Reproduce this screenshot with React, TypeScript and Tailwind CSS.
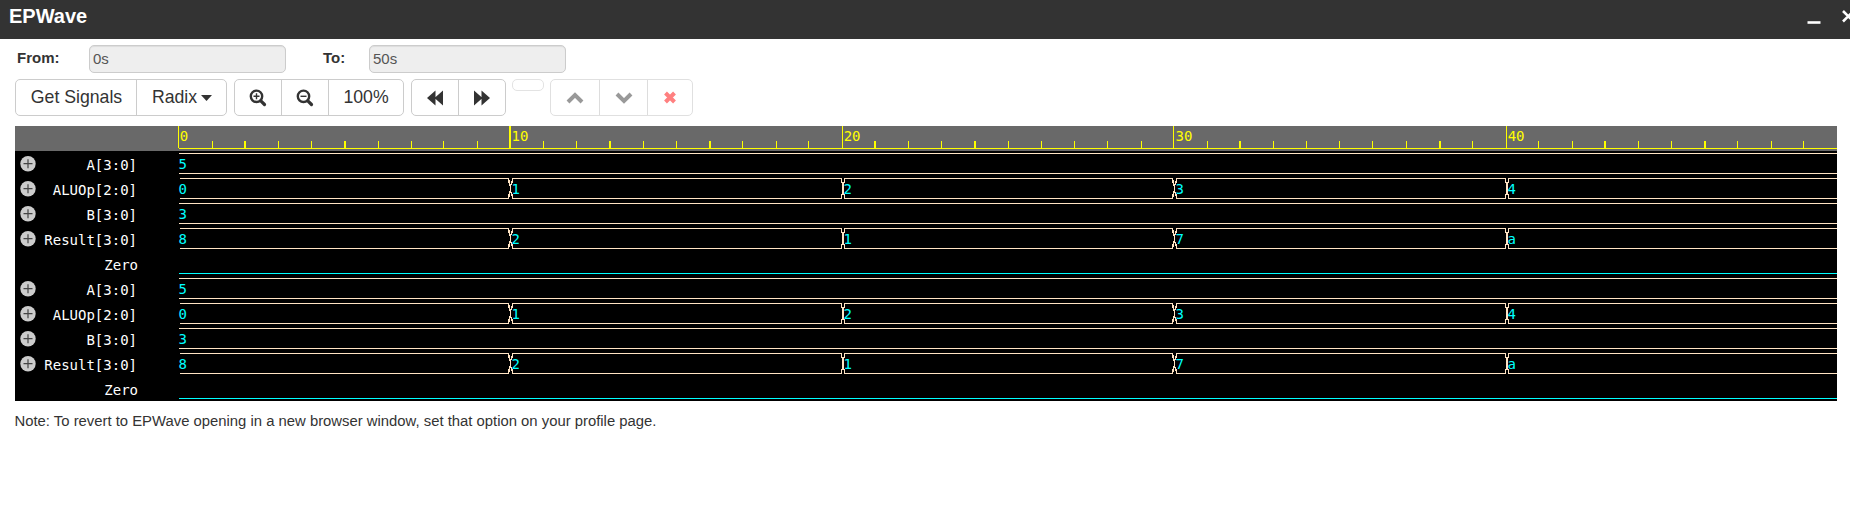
type Signal = { name: string; values?: string[] };

const signals: Signal[] = [
  { name: "A[3:0]", values: ["5"] },
  { name: "ALUOp[2:0]", values: ["0", "1", "2", "3", "4"] },
  { name: "B[3:0]", values: ["3"] },
  { name: "Result[3:0]", values: ["8", "2", "1", "7", "a"] },
  { name: "Zero" },
];
const rows = [...signals, ...signals];

// Left edges of the divisions, relative to the plot area.
const majors = [0, 331, 664, 995, 1328];
const minors = [
  34, 66, 100, 133, 166, 200, 233, 265, 299, 365, 398, 431, 465, 498, 531, 564, 598, 630, 696, 730, 763, 796, 830,
  863, 896, 929, 963, 1029, 1061, 1095, 1128, 1161, 1194, 1228, 1261, 1294, 1360, 1394, 1426, 1460, 1493, 1526, 1559,
  1593, 1625,
];
const wideMinors = [66, 166, 431, 531, 696, 796, 1061, 1261, 1426, 1526];
const PLOT_W = 1659;

function Ruler() {
  return (
    <svg width={PLOT_W} height={25} shapeRendering="crispEdges" className="block">
      <rect x={1} y={22} width={PLOT_W} height={1} fill="#ff0" />
      {minors.map((x) => (
        <rect key={x} x={x} y={15} width={wideMinors.includes(x) ? 2 : 1} height={7} fill="#ff0" />
      ))}
      {majors.map((x, n) => (
        <g key={x} fill="#ff0">
          <rect x={x} y={0} width={n === 1 ? 2 : 1} height={22} />
          <text x={x + (n % 2 === 1 ? 2.5 : 1.7)} y={15} className="font-['DejaVu_Sans_Mono',monospace] text-[14px]">
            {n * 10}
          </text>
        </g>
      ))}
    </svg>
  );
}

function Crossing({ x, width }: { x: number; width: number }) {
  return (
    <g>
      <rect x={x - 1} y={2} width={1} height={5} />
      <rect x={x - 1} y={18} width={1} height={5} />
      <rect x={x + width} y={2} width={1} height={5} />
      <rect x={x + width} y={18} width={1} height={5} />
      {width === 3 ? (
        <>
          <rect x={x} y={4} width={1} height={6} />
          <rect x={x} y={15} width={1} height={6} />
          <rect x={x + 2} y={5} width={1} height={4} />
          <rect x={x + 2} y={16} width={1} height={4} />
          <rect x={x + 1} y={8} width={1} height={9} />
        </>
      ) : (
        <rect x={x} y={6} width={2} height={13} />
      )}
    </g>
  );
}

function Wave({ signal }: { signal: Signal }) {
  if (!signal.values) {
    return (
      <svg width={PLOT_W} height={25} shapeRendering="crispEdges" className="block">
        <rect x={1} y={22} width={PLOT_W} height={1} fill="#0ff" />
      </svg>
    );
  }
  const values = signal.values;
  return (
    <svg width={PLOT_W} height={25} shapeRendering="crispEdges" className="block">
      {values.map((v, i) => {
        const crossW = i % 2 === 1 ? 3 : 2;
        const start = i === 0 ? (values.length > 1 ? 2 : 1) : majors[i] + crossW;
        const end = i < values.length - 1 ? majors[i + 1] : PLOT_W;
        return (
          <g key={i} fill="#ffe4c4">
            <rect x={start} y={2} width={end - start} height={1} />
            <rect x={start} y={22} width={end - start} height={1} />
            {i > 0 && <Crossing x={majors[i]} width={crossW} />}
            <text
              x={i === 0 ? 0.5 : majors[i] + (i % 2 === 1 ? 2.5 : 1.5)}
              y={18}
              fill="#0ff"
              className="font-['DejaVu_Sans_Mono',monospace] text-[14px]"
            >
              {v}
            </text>
          </g>
        );
      })}
    </svg>
  );
}

function Zoom({ plus }: { plus?: boolean }) {
  return (
    <svg width="18" height="18" viewBox="0 0 18 18" fill="none" stroke="#333">
      <circle cx="7.5" cy="7.3" r="5.7" strokeWidth="2.4" />
      <path d="M11.8 11.8L15.500 15.500" strokeWidth="3.2" strokeLinecap="round" />
      <path d={plus ? "M4.5 7.3h6M7.5 4.3v6" : "M4.5 7.3h6"} strokeWidth="1.4" />
    </svg>
  );
}

const group = "flex h-[37px] rounded-[5px] border border-[#ccc] divide-x divide-[#ccc]";
const cell = "flex items-center justify-center";
const field =
  "h-[28px] w-[197px] rounded-[5px] border border-[#ccc] bg-[#eee] pl-[3px] leading-[26px] text-[#555] shadow-[inset_0_1px_1px_rgba(0,0,0,0.075)]";

export default function App() {
  return (
    <div className="h-[527px] w-[1850px] overflow-hidden bg-white font-['Liberation_Sans',Arial,sans-serif] text-[#333]">
      <header className="flex h-[39px] items-start justify-between bg-[#333] pl-[9px] text-white">
        <h1 className="pt-[3px] text-[20px] leading-[26px] font-bold">EPWave</h1>
        <svg width="43" height="39" viewBox="0 0 43 39" fill="none" stroke="#fff">
          <path d="M.5 22.500h13" strokeWidth="2.6" />
          <path d="M36 11l10 10M36 21.500l10-10" strokeWidth="2.6" />
        </svg>
      </header>

      <div className="flex pt-[6px] pl-[17px] text-[15px]">
        <label className="w-[72px] pt-[2px] leading-[21px] font-bold">From:</label>
        <div className={field}>0s</div>
        <label className="ml-[37px] w-[46px] pt-[2px] leading-[21px] font-bold">To:</label>
        <div className={field}>50s</div>
      </div>

      <div className="mt-[6px] flex items-start pl-[15px] text-[17.700px]">
        <div className={group + " w-[212px]"}>
          <button className={cell + " w-[121px] pl-[1px]"}>Get Signals</button>
          <button className={cell + " flex-1 gap-[4px] pl-[1px]"}>
            Radix
            <svg width="11" height="6" viewBox="0 0 11 6" fill="#333"><path d="M0 0h11L5.500 6z" /></svg>
          </button>
        </div>
        <div className={group + " ml-[7px] w-[170px]"}>
          <button className={cell + " w-[47px]"}><Zoom plus /></button>
          <button className={cell + " w-[47px]"}><Zoom /></button>
          <button className={cell + " flex-1"}>100%</button>
        </div>
        <div className={group + " ml-[7px] w-[95px]"}>
          <button className={cell + " w-[47px]"}>
            <svg width="16" height="16" viewBox="0 0 16 16" fill="#333"><path d="M8.500 .5v15L0 8zM16 .5v15L7.500 8z" /></svg>
          </button>
          <button className={cell + " flex-1"}>
            <svg width="16" height="16" viewBox="0 0 16 16" fill="#333"><path d="M0 .5v15L8.500 8zM7.500 .5v15L16 8z" /></svg>
          </button>
        </div>
        <div className="ml-[6px] h-[12px] w-[32px] rounded-[5px] border border-[#e3e3e3]" />
        <div className="ml-[6px] flex h-[37px] w-[143px] divide-x divide-[#ddd] rounded-[5px] border border-[#e0e0e0]">
          <button className={cell + " w-[49px]"}>
            <svg width="18" height="14" viewBox="0 0 18 14" fill="none" stroke="#999" strokeWidth="4"><path d="M2 11l7-7 7 7" /></svg>
          </button>
          <button className={cell + " w-[48px]"}>
            <svg width="18" height="14" viewBox="0 0 18 14" fill="none" stroke="#999" strokeWidth="4"><path d="M2 3l7 7 7-7" /></svg>
          </button>
          <button className={cell + " flex-1"}>
            <svg width="14" height="14" viewBox="0 0 14 14" fill="none" stroke="#ff8080" strokeWidth="4"><path d="M2.500 2l9 9M11.500 2l-9 9" /></svg>
          </button>
        </div>
      </div>

      <main className="mt-[10px] ml-[15px] h-[275px] w-[1822px] bg-black">
        <div className="h-[25px] bg-[#696969] pl-[163px]"><Ruler /></div>
        {rows.map((s, i) => (
          <div key={i} className="flex h-[25px]">
            <div
              className={
                "flex w-[163px] justify-between pl-[5px] font-['DejaVu_Sans_Mono',monospace] text-[14px] leading-[29px] text-white " +
                (s.values ? "pr-[41px]" : "pr-[40px]")
              }
            >
              {s.values ? (
                <svg width="16" height="16" viewBox="0 0 16 16" className="mt-[5px] shrink-0">
                  <circle cx="8" cy="7.700" r="7.700" fill="#ccc" />
                  <path d="M3.500 7.700h9M8 3.200v9" stroke="#444" strokeWidth="1.200" />
                </svg>
              ) : (
                <span />
              )}
              <span className="whitespace-nowrap">{s.name}</span>
            </div>
            <Wave signal={s} />
          </div>
        ))}
      </main>

      <p className="mt-[10px] ml-[14.500px] text-[14.850px] leading-[21px]">
        Note: To revert to EPWave opening in a new browser window, set that option on your profile page.
      </p>
    </div>
  );
}
